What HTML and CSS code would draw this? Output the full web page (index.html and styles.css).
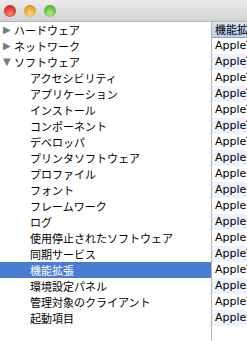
FILE: index.html
```html
<!DOCTYPE html>
<html lang="ja">
<head>
  <meta charset="UTF-8">
  <title>システム情報</title>
  <link rel="stylesheet" href="styles.css">
</head>
<body>
  <div id="window">
    <div class="titlebar">
      <span class="light red"></span>
      <span class="light yellow"></span>
      <span class="light green"></span>
    </div>

    <div class="content">
      <!-- 左側：項目ツリー -->
      <ul class="tree">
        <li class="group"><span class="arrow">&#9654;</span>ハードウェア</li>
        <li class="group"><span class="arrow">&#9654;</span>ネットワーク</li>
        <li class="group"><span class="arrow open">&#9660;</span>ソフトウェア</li>
        <li class="item">アクセシビリティ</li>
        <li class="item">アプリケーション</li>
        <li class="item">インストール</li>
        <li class="item">コンポーネント</li>
        <li class="item">デベロッパ</li>
        <li class="item">プリンタソフトウェア</li>
        <li class="item">プロファイル</li>
        <li class="item">フォント</li>
        <li class="item">フレームワーク</li>
        <li class="item">ログ</li>
        <li class="item">使用停止されたソフトウェア</li>
        <li class="item">同期サービス</li>
        <li class="item selected">機能拡張</li>
        <li class="item">環境設定パネル</li>
        <li class="item">管理対象のクライアント</li>
        <li class="item">起動項目</li>
      </ul>

      <!-- 右側：機能拡張の一覧 -->
      <div class="list">
        <div class="list-header">機能拡張</div>
        <div class="row">AppleTyMCEDriver</div>
        <div class="row">AppleThunderboltDPAdapters</div>
        <div class="row">AppleThunderboltEDMService</div>
        <div class="row">AppleThunderboltIP</div>
        <div class="row">AppleThunderboltNHI</div>
        <div class="row">AppleThunderboltPCIAdapters</div>
        <div class="row">AppleThunderboltUTDM</div>
        <div class="row">AppleUpstreamUserClient</div>
        <div class="row">AppleUSBAudio</div>
        <div class="row">AppleUSBDisplays</div>
        <div class="row">AppleUSBEthernetHost</div>
        <div class="row">AppleUSBMultitouch</div>
        <div class="row">AppleUSBTopCase</div>
        <div class="row">AppleVADriver</div>
        <div class="row">AppleVirtIO</div>
        <div class="row">AppleXsanFilter</div>
        <div class="row">AppleYukon2</div>
        <div class="row">AppleSMBusPCI</div>
      </div>
    </div>
  </div>
</body>
</html>
```

FILE: styles.css
```css
* { margin: 0; padding: 0; box-sizing: border-box; }
body {
  width: 247px;
  height: 341px;
  overflow: hidden;
  background: #fff;
  font-family: "Noto Sans CJK JP", sans-serif;
  font-size: 11px;
  color: #000;
}
#window {
  display: flex;
  flex-direction: column;
  height: 341px;
}
.titlebar {
  height: 22px;
  flex: none;
  display: flex;
  align-items: center;
  gap: 8px;
  padding-left: 4px;
  background: linear-gradient(#ebebeb, #d2d2d2);
  border-bottom: 1px solid #b5b5b5;
}
.light {
  width: 12px;
  height: 12px;
  border-radius: 50%;
}
.red    { background: radial-gradient(circle at 50% 70%, #ff8a80, #e0352b 60%, #a51d16); }
.yellow { background: radial-gradient(circle at 50% 70%, #ffd68a, #e7a32b 60%, #a96b12); }
.green  { background: radial-gradient(circle at 50% 70%, #b7ee8c, #5fbf3a 60%, #3a8a1e); }

.content {
  flex: 1;
  display: flex;
  overflow: hidden;
}
.tree {
  list-style: none;
  width: 212px;
  flex: none;
  border-right: 1px solid #b3b3b3;
}
.tree li {
  height: 16px;
  line-height: 16px;
  white-space: nowrap;
}
.group { padding-left: 3px; }
.item  { padding-left: 30px; }
.arrow {
  display: inline-block;
  width: 11px;
  color: #7a7a7a;
  font-family: "DejaVu Sans", sans-serif;
  font-size: 10px;
  vertical-align: top;
}
.tree li.selected {
  background: #4a7cd4;
  color: #fff;
}

.list {
  flex: 1;
  overflow: hidden;
}
.list-header {
  height: 16px;
  line-height: 15px;
  padding-left: 3px;
  white-space: nowrap;
  overflow: hidden;
  background: linear-gradient(#d9e5f6, #b9cdea);
  border-bottom: 1px solid #8fa3c4;
}
.row {
  height: 16px;
  line-height: 16px;
  padding-left: 3px;
  white-space: nowrap;
  overflow: hidden;
  font-family: "DejaVu Sans", sans-serif;
}
.row:nth-child(odd) { background: #edf3fe; }
```
